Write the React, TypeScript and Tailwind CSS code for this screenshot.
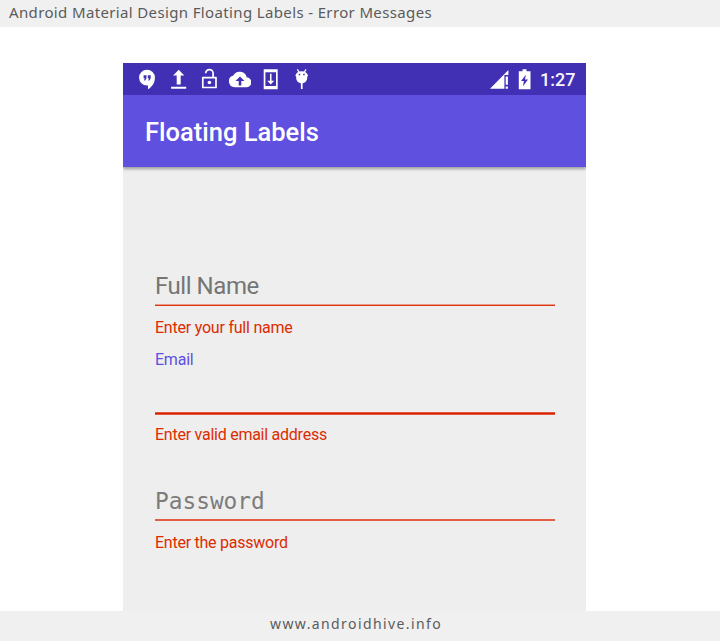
import type { ReactNode } from "react";

function Glyph({ width, className = "", children }: { width: number; className?: string; children: ReactNode }) {
  return (
    <svg width={width} height={22} viewBox={`0 0 ${width} 22`} fill="#fff" className={`block shrink-0 ${className}`}>
      {children}
    </svg>
  );
}

function StatusBar() {
  return (
    <div className="flex h-8 items-start bg-[#4230b4] pt-[5px] pl-4">
      <Glyph width={16}>
        <path d="M8 1.8a7.9 7.9 0 0 0 0 15.8h1v3.6c3.800-1.900 6.900-6.400 6.900-11.500A7.900 7.900 0 0 0 8 1.800zM4.600 7.200h2.900v3l-1.300 2.200H5l.7-2.200H4.600zm4.200 0h2.900v3l-1.300 2.200H9.200l.7-2.200H8.800z" fillRule="evenodd" />
      </Glyph>
      <Glyph width={16} className="ml-4">
        <path d="M7.700 1.700l5.600 5.700H9.700v9H5.700v-9H2.100zM.1 18.800h15.100v2H.1z" />
      </Glyph>
      <Glyph width={16} className="ml-[14px]">
        <path d="M1.800 9.600h13.200v9.900H1.800z" fill="none" stroke="#fff" strokeWidth="1.700" strokeLinejoin="round" />
        <path d="M4.700 5.300a3.700 3.700 0 0 1 7.400 0v4.300" fill="none" stroke="#fff" strokeWidth="1.700" />
        <circle cx="8.400" cy="14.500" r="1.800" />
      </Glyph>
      <Glyph width={22} className="ml-[12px]">
        <path d="M17.700 9.200A7.200 7.200 0 0 0 4.300 7.600a5.900 5.900 0 0 0 1.400 11.600h11.400a5 5 0 0 0 .6-10zM12.300 13v4.600H9.700V13H6.500L11 8.400l4.500 4.600z" fillRule="evenodd" />
      </Glyph>
      <Glyph width={16} className="ml-[12px]">
        <path d="M.7 1.300h14v20H.7zM2.400 4.200v13.900H13V4.200z" fillRule="evenodd" />
        <path d="M7 5.700h1.500v7.100h2.700l-3.500 3.600-3.500-3.600H7z" />
      </Glyph>
      <Glyph width={14} className="ml-4">
        <path d="M2.300 1.300l2 3M11.100 1.300l-2 3" stroke="#fff" strokeWidth="1.200" />
        <path d="M.3 7.600c1-2.900 3.300-4.400 6.400-4.400s5.400 1.500 6.400 4.400l-.9 1.200c.3 3.900-2 6.600-5.500 6.600s-5.800-2.700-5.500-6.600z" />
        <path d="M5.900 14h1.700v7H5.900z" />
        <path d="M3.700 5.700h1.500v1.500H3.700zM8.200 5.700h1.500v1.500H8.200z" fill="#4230b4" />
      </Glyph>
      <Glyph width={20} className="ml-[181px]">
        <path d="M18.400 2v5h-4v13.700H0z" />
        <path d="M15.700 8.400h2.200v8.400h-2.200zM15.700 18.400h2.200v2.300h-2.200z" />
      </Glyph>
      <Glyph width={14} className="ml-[8px]">
        <path d="M4.500 1.300h4v2h4v18H.8v-18h3.700zM7.900 6.700L3 13.100h2.900L5 18.200l5-6.700H7z" fillRule="evenodd" />
      </Glyph>
      <span className="ml-2 font-[Roboto,sans-serif] text-[18px] leading-[24px] font-medium text-[#f6f5fd]">1:27</span>
    </div>
  );
}

export default function App() {
  return (
    <div className="flex h-[641px] w-[720px] flex-col overflow-hidden bg-white font-[Roboto,sans-serif]">
      <header className="h-[27px] bg-[#f0f0f0] pl-[9px] font-['Noto_Sans',sans-serif] text-[15px] leading-[25px] tracking-[0.36px] whitespace-nowrap text-[#5b5b5b]">
        Android Material Design Floating Labels - Error Messages
      </header>
      <main className="mt-9 ml-[123px] flex h-[548px] w-[463px] flex-col bg-[#eeeeee]">
        <StatusBar />
        <div className="relative h-[72px] bg-[#5f50e0] pl-[22px] text-[25.5px] leading-[74px] font-medium text-white shadow-[0_2px_3px_rgba(0,0,0,0.35)] [clip-path:inset(0_0_-6px_0)]">
          Floating Labels
        </div>
        <form className="flex flex-col pt-[101px] pr-[31px] pl-8">
          <div className="h-9 text-[24px] leading-9 tracking-[-0.45px] text-[#757575]">Full Name</div>
          <div className="h-[2px] border-t border-[#eb9a87] bg-[#dd3613]" />
          <div className="mt-[12px] h-5 text-[16px] leading-5 tracking-[-0.22px] text-[#dd2c00]">Enter your full name</div>
          <div className="mt-[12px] h-5 text-[16px] leading-5 tracking-[-0.22px] text-[#5f50e0]">Email</div>
          <div className="mt-[42px] h-[3px] border-y border-[#e35a3c] bg-[#d51e00]" />
          <div className="mt-[10px] h-5 text-[16px] leading-5 tracking-[-0.25px] text-[#dd2c00]">Enter valid email address</div>
          <div className="mt-[38px] h-9 font-['DejaVu_Sans_Mono',monospace] text-[22.8px] leading-9 text-[#7c7c7c]">Password</div>
          <div className="h-[2px] bg-[#e45f42]" />
          <div className="mt-3 h-5 text-[16px] leading-5 tracking-[-0.25px] text-[#dd2c00]">Enter the password</div>
        </form>
      </main>
      <footer className="h-[30px] bg-[#f0f0f0] pl-[270px] font-['Noto_Sans',sans-serif] text-[14px] leading-[26px] tracking-[1.4px] text-[#5b5b5b]">
        www.androidhive.info
      </footer>
    </div>
  );
}
